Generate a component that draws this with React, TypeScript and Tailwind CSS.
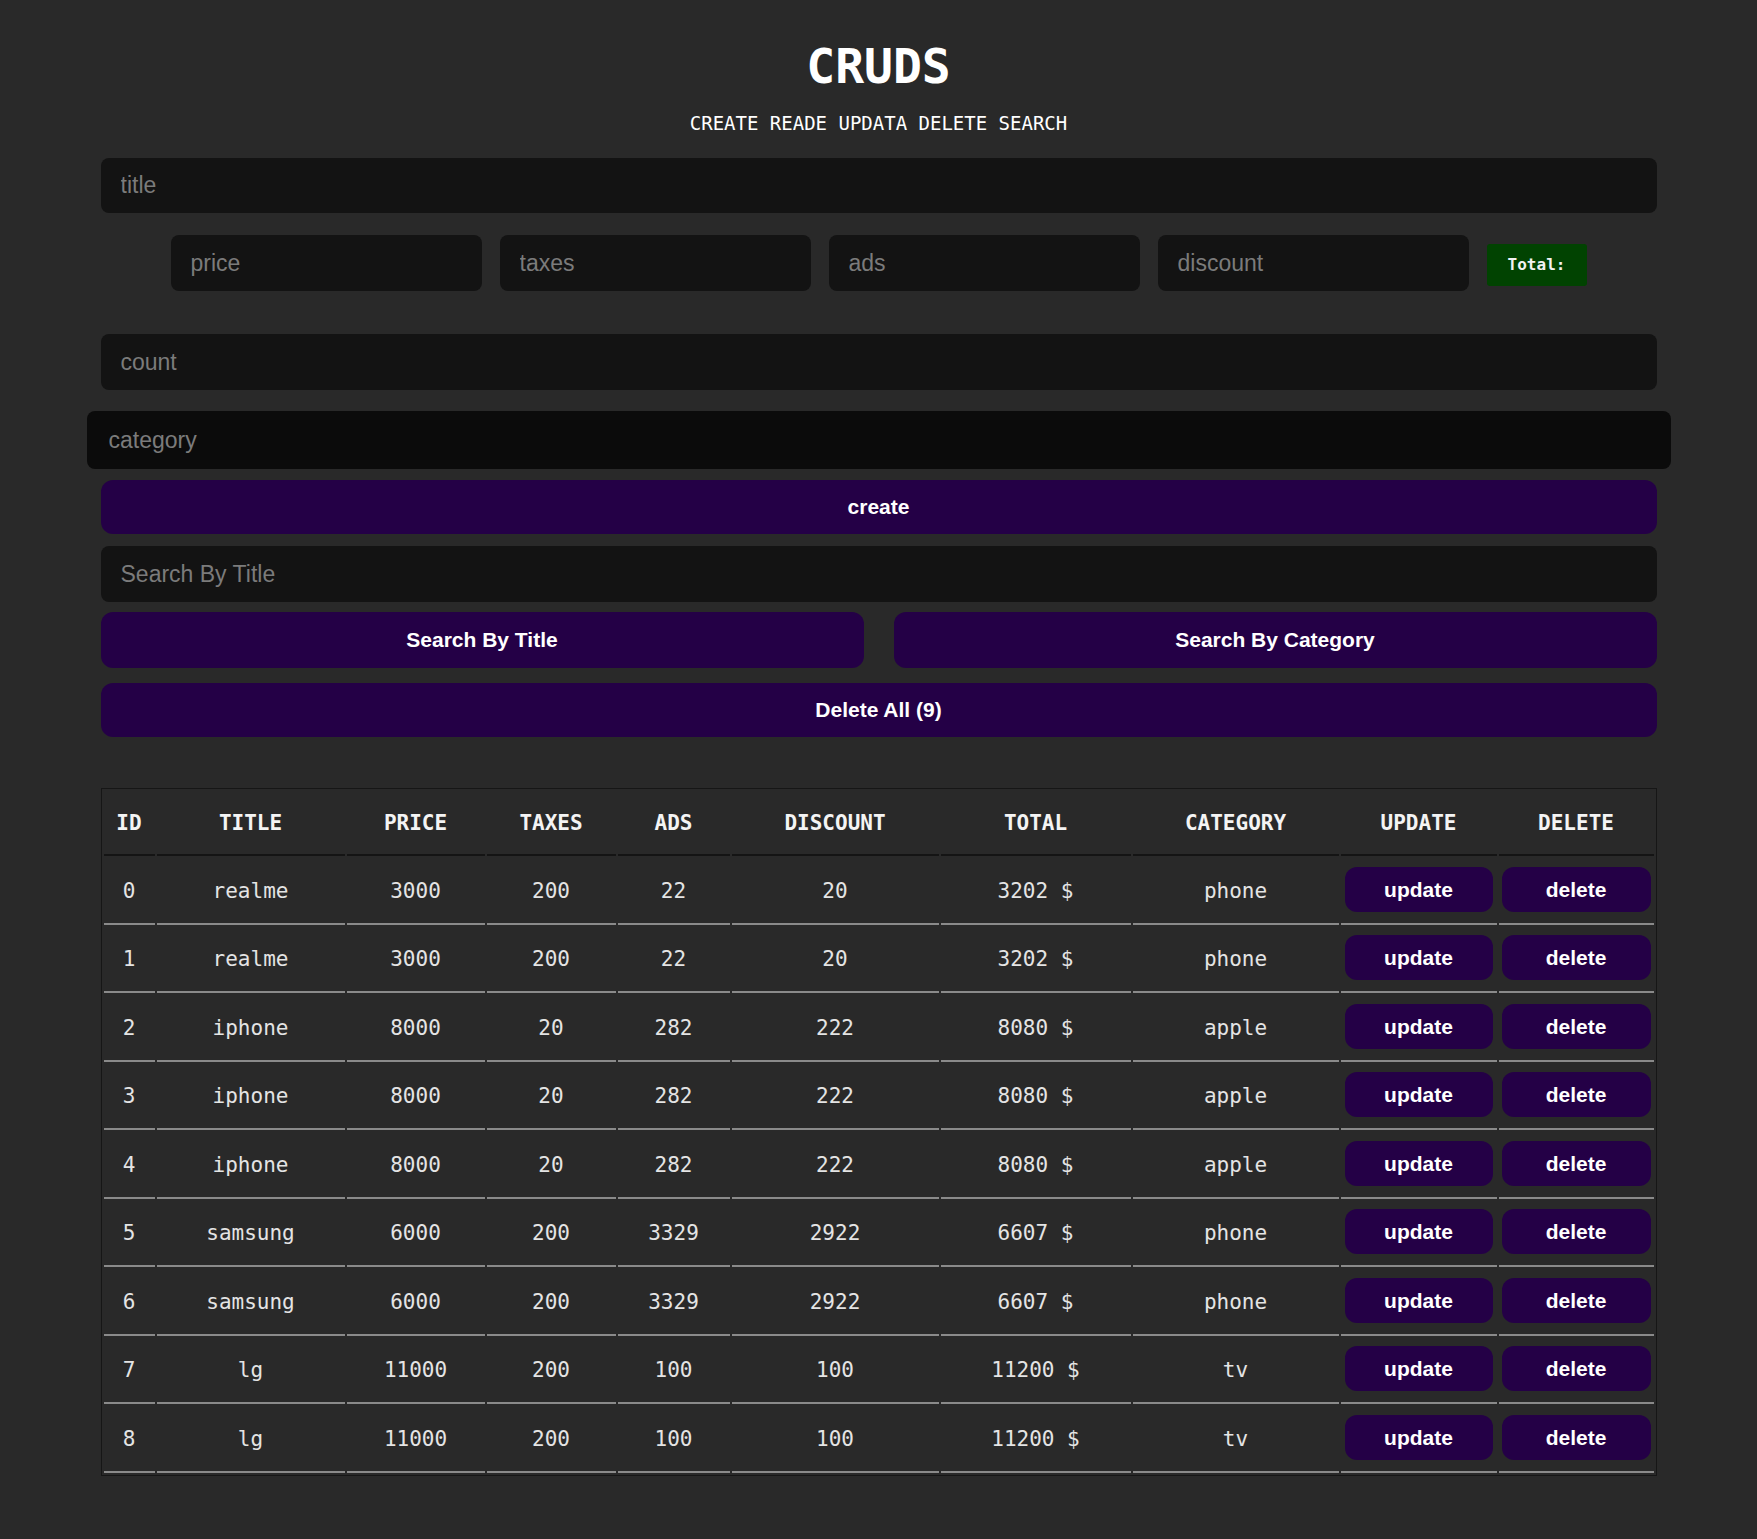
import React from 'react';

type Product = {
  title: string;
  price: number;
  taxes: number;
  ads: number;
  discount: number;
  total: number;
  category: string;
};

const products: Product[] = [
  { title: 'realme', price: 3000, taxes: 200, ads: 22, discount: 20, total: 3202, category: 'phone' },
  { title: 'realme', price: 3000, taxes: 200, ads: 22, discount: 20, total: 3202, category: 'phone' },
  { title: 'iphone', price: 8000, taxes: 20, ads: 282, discount: 222, total: 8080, category: 'apple' },
  { title: 'iphone', price: 8000, taxes: 20, ads: 282, discount: 222, total: 8080, category: 'apple' },
  { title: 'iphone', price: 8000, taxes: 20, ads: 282, discount: 222, total: 8080, category: 'apple' },
  { title: 'samsung', price: 6000, taxes: 200, ads: 3329, discount: 2922, total: 6607, category: 'phone' },
  { title: 'samsung', price: 6000, taxes: 200, ads: 3329, discount: 2922, total: 6607, category: 'phone' },
  { title: 'lg', price: 11000, taxes: 200, ads: 100, discount: 100, total: 11200, category: 'tv' },
  { title: 'lg', price: 11000, taxes: 200, ads: 100, discount: 100, total: 11200, category: 'tv' },
];

const mono = "font-['DejaVu_Sans_Mono',monospace]";
const field =
  "w-full rounded-lg bg-[#131313] px-[20px] text-[23px] text-white outline-none font-['Liberation_Sans',Arial,sans-serif] placeholder:text-[#7b7b7b]";
const btn =
  "w-full rounded-[12px] bg-[#240046] text-[21px] font-bold text-white font-['Liberation_Sans',Arial,sans-serif]";

const headers = [
  { label: 'ID', w: 'w-[51px]' },
  { label: 'TITLE', w: 'w-[188px]' },
  { label: 'PRICE', w: 'w-[138px]' },
  { label: 'TAXES', w: 'w-[129px]' },
  { label: 'ADS', w: 'w-[112px]' },
  { label: 'DISCOUNT', w: 'w-[207px]' },
  { label: 'TOTAL', w: 'w-[190px]' },
  { label: 'CATEGORY', w: 'w-[206px]' },
  { label: 'UPDATE', w: 'w-[156px]' },
  { label: 'DELETE', w: 'w-[155px]' },
];

export default function App() {
  return (
    <div className={`min-h-screen bg-[#292929] text-white ${mono}`}>
      <div className="mx-auto flex w-[1556px] flex-col pb-[60px]">
        {/* Header */}
        <h1 className="mt-[38px] text-center text-[48px] font-bold leading-[56px]">CRUDS</h1>
        <p className="mt-[17px] text-center text-[19px] leading-[24px]">CREATE READE UPDATA DELETE SEARCH</p>

        {/* Inputs */}
        <input className={`${field} mt-[23px] h-[55px]`} placeholder="title" />

        <div className="mt-[22px] flex h-[56px] items-center justify-center gap-[18px]">
          {['price', 'taxes', 'ads', 'discount'].map((p) => (
            <input key={p} className={`${field} h-[56px] !w-[311px]`} placeholder={p} />
          ))}
          <div className="mt-[4px] flex h-[42px] w-[100px] items-center justify-center rounded-[3px] bg-[#014301] text-[16px] font-bold text-[#f2f2f2]">
            Total:
          </div>
        </div>

        <input className={`${field} mt-[43px] h-[56px]`} placeholder="count" />
        <input
          className={`${field} mx-[-14px] mt-[21px] h-[58px] !w-[1584px] !bg-[#0b0b0b] px-[22px]`}
          placeholder="category"
        />

        <button className={`${btn} mt-[11px] h-[54px]`}>create</button>

        <input className={`${field} mt-[12px] h-[56px]`} placeholder="Search By Title" />

        <div className="mt-[10px] flex gap-[30px]">
          <button className={`${btn} h-[56px]`}>Search By Title</button>
          <button className={`${btn} h-[56px]`}>Search By Category</button>
        </div>

        <button className={`${btn} mt-[15px] h-[54px]`}>Delete All (9)</button>

        {/* Table */}
        <table className="mt-[51px] w-full table-fixed border-separate border-spacing-[2px] border border-[#161616] text-center">
          <thead>
            <tr>
              {headers.map((h) => (
                <th
                  key={h.label}
                  className={`${h.w} h-[65px] border-b-2 border-[#141414] px-0 pt-[3px] text-[21px] font-bold text-[#f4f4f4]`}
                >
                  {h.label}
                </th>
              ))}
            </tr>
          </thead>
          <tbody>
            {products.map((p, i) => (
              <tr key={i} className="text-[21px] text-[#e4e4e4]">
                <td className="h-[66.5px] border-b-2 border-[#8a8a8a] pt-[2px]">{i}</td>
                <td className="border-b-2 border-[#8a8a8a] pt-[2px]">{p.title}</td>
                <td className="border-b-2 border-[#8a8a8a] pt-[2px]">{p.price}</td>
                <td className="border-b-2 border-[#8a8a8a] pt-[2px]">{p.taxes}</td>
                <td className="border-b-2 border-[#8a8a8a] pt-[2px]">{p.ads}</td>
                <td className="border-b-2 border-[#8a8a8a] pt-[2px]">{p.discount}</td>
                <td className="border-b-2 border-[#8a8a8a] pt-[2px]">{p.total} $</td>
                <td className="border-b-2 border-[#8a8a8a] pt-[2px]">{p.category}</td>
                <td className="border-b-2 border-[#8a8a8a] px-[4px]">
                  <button className={`${btn} mb-[2px] h-[45px]`}>update</button>
                </td>
                <td className="border-b-2 border-[#8a8a8a] px-[3px]">
                  <button className={`${btn} mb-[2px] h-[45px]`}>delete</button>
                </td>
              </tr>
            ))}
          </tbody>
        </table>
      </div>
    </div>
  );
}
